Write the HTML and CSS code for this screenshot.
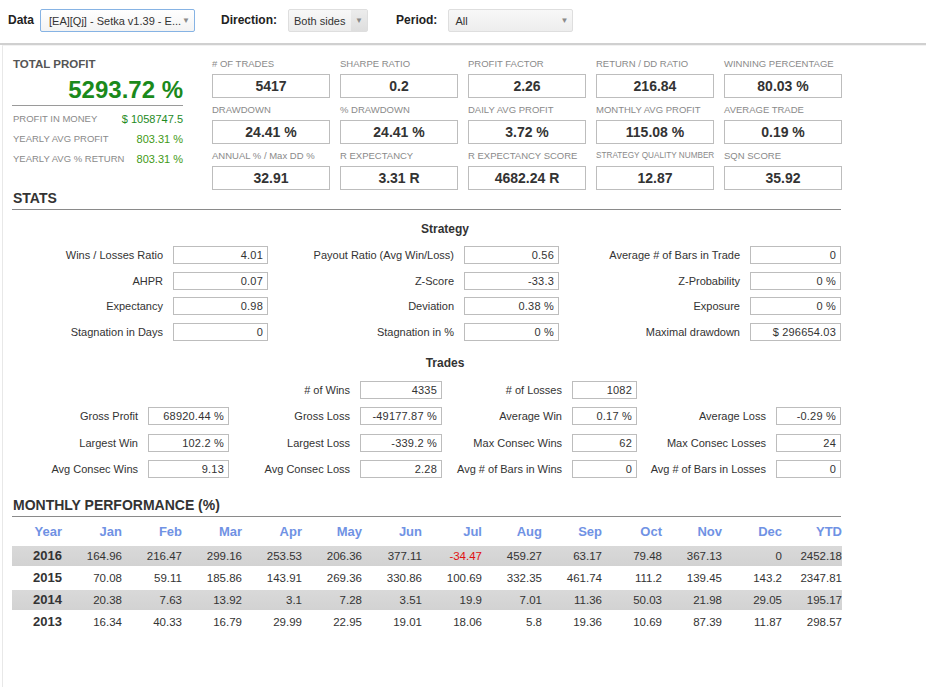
FILE: index.html
```html
<!DOCTYPE html>
<html lang="en">
  <head>
    <meta charset="utf-8" />
    <title>Strategy Report</title>
    <link rel="stylesheet" href="styles.css">
  </head>
  <body>
    <!-- Filters -->
    <div class="toolbar">
      <span class="toolbar-label">Data</span>
      <div class="select select-data">
        <span class="select-text">[EA][Qj] - Setka v1.39 - E...</span>
        <span class="select-arrow">&#9660;</span>
      </div>
      <span class="toolbar-label label-direction">Direction:</span>
      <div class="select select-direction">
        <span class="select-text">Both sides</span>
        <span class="select-arrow">&#9660;</span>
      </div>
      <span class="toolbar-label label-period">Period:</span>
      <div class="select select-period">
        <span class="select-text">All</span>
        <span class="select-arrow">&#9660;</span>
      </div>
    </div>

    <div class="panel">
      <!-- Summary -->
      <div class="summary">
        <div class="total">
          <div class="total-title">Total Profit</div>
          <div class="total-value">5293.72 %</div>
          <div class="total-row">
            <span class="total-label">Profit in money</span>
            <span class="total-num dark">$ 1058747.5</span>
          </div>
          <div class="total-row">
            <span class="total-label">Yearly avg profit</span>
            <span class="total-num">803.31 %</span>
          </div>
          <div class="total-row">
            <span class="total-label">Yearly avg % return</span>
            <span class="total-num">803.31 %</span>
          </div>
        </div>

        <div class="metrics">
          <div class="metric"><div class="metric-label"># of Trades</div><div class="metric-box">5417</div></div>
          <div class="metric"><div class="metric-label">Sharpe Ratio</div><div class="metric-box">0.2</div></div>
          <div class="metric"><div class="metric-label">Profit Factor</div><div class="metric-box">2.26</div></div>
          <div class="metric"><div class="metric-label">Return / DD Ratio</div><div class="metric-box">216.84</div></div>
          <div class="metric"><div class="metric-label">Winning Percentage</div><div class="metric-box">80.03 %</div></div>

          <div class="metric"><div class="metric-label">Drawdown</div><div class="metric-box">24.41 %</div></div>
          <div class="metric"><div class="metric-label">% Drawdown</div><div class="metric-box">24.41 %</div></div>
          <div class="metric"><div class="metric-label">Daily Avg Profit</div><div class="metric-box">3.72 %</div></div>
          <div class="metric"><div class="metric-label">Monthly Avg Profit</div><div class="metric-box">115.08 %</div></div>
          <div class="metric"><div class="metric-label">Average Trade</div><div class="metric-box">0.19 %</div></div>

          <div class="metric"><div class="metric-label no-caps">ANNUAL % / Max DD %</div><div class="metric-box">32.91</div></div>
          <div class="metric"><div class="metric-label">R Expectancy</div><div class="metric-box">3.31 R</div></div>
          <div class="metric"><div class="metric-label">R Expectancy Score</div><div class="metric-box">4682.24 R</div></div>
          <div class="metric"><div class="metric-label small">Strategy Quality Number</div><div class="metric-box">12.87</div></div>
          <div class="metric"><div class="metric-label">SQN Score</div><div class="metric-box">35.92</div></div>
        </div>
      </div>

      <!-- Stats -->
      <h2 class="section-title">STATS</h2>

      <h3 class="sub-title">Strategy</h3>
      <div class="kv-grid strategy">
        <span class="kv-label">Wins / Losses Ratio</span><div class="kv-box">4.01</div>
        <span class="kv-label">Payout Ratio (Avg Win/Loss)</span><div class="kv-box">0.56</div>
        <span class="kv-label">Average # of Bars in Trade</span><div class="kv-box">0</div>

        <span class="kv-label">AHPR</span><div class="kv-box">0.07</div>
        <span class="kv-label">Z-Score</span><div class="kv-box">-33.3</div>
        <span class="kv-label">Z-Probability</span><div class="kv-box">0 %</div>

        <span class="kv-label">Expectancy</span><div class="kv-box">0.98</div>
        <span class="kv-label">Deviation</span><div class="kv-box">0.38 %</div>
        <span class="kv-label">Exposure</span><div class="kv-box">0 %</div>

        <span class="kv-label">Stagnation in Days</span><div class="kv-box">0</div>
        <span class="kv-label">Stagnation in %</span><div class="kv-box">0 %</div>
        <span class="kv-label">Maximal drawdown</span><div class="kv-box">$ 296654.03</div>
      </div>

      <h3 class="sub-title trades-title">Trades</h3>
      <div class="kv-grid trades">
        <span></span><span></span>
        <span class="kv-label"># of Wins</span><div class="kv-box">4335</div>
        <span class="kv-label"># of Losses</span><div class="kv-box">1082</div>
        <span></span><span></span>

        <span class="kv-label">Gross Profit</span><div class="kv-box">68920.44 %</div>
        <span class="kv-label">Gross Loss</span><div class="kv-box">-49177.87 %</div>
        <span class="kv-label">Average Win</span><div class="kv-box">0.17 %</div>
        <span class="kv-label">Average Loss</span><div class="kv-box">-0.29 %</div>

        <span class="kv-label">Largest Win</span><div class="kv-box">102.2 %</div>
        <span class="kv-label">Largest Loss</span><div class="kv-box">-339.2 %</div>
        <span class="kv-label">Max Consec Wins</span><div class="kv-box">62</div>
        <span class="kv-label">Max Consec Losses</span><div class="kv-box">24</div>

        <span class="kv-label">Avg Consec Wins</span><div class="kv-box">9.13</div>
        <span class="kv-label">Avg Consec Loss</span><div class="kv-box">2.28</div>
        <span class="kv-label">Avg # of Bars in Wins</span><div class="kv-box">0</div>
        <span class="kv-label">Avg # of Bars in Losses</span><div class="kv-box">0</div>
      </div>

      <!-- Monthly performance -->
      <h2 class="section-title monthly-title">MONTHLY PERFORMANCE (%)</h2>
      <table class="monthly">
        <thead>
          <tr>
            <th class="col-year">Year</th>
            <th>Jan</th><th>Feb</th><th>Mar</th><th>Apr</th><th>May</th><th>Jun</th>
            <th>Jul</th><th>Aug</th><th>Sep</th><th>Oct</th><th>Nov</th><th>Dec</th><th>YTD</th>
          </tr>
        </thead>
        <tbody>
          <tr class="band">
            <td class="col-year">2016</td>
            <td>164.96</td><td>216.47</td><td>299.16</td><td>253.53</td><td>206.36</td><td>377.11</td>
            <td class="neg">-34.47</td><td>459.27</td><td>63.17</td><td>79.48</td><td>367.13</td><td>0</td><td>2452.18</td>
          </tr>
          <tr>
            <td class="col-year">2015</td>
            <td>70.08</td><td>59.11</td><td>185.86</td><td>143.91</td><td>269.36</td><td>330.86</td>
            <td>100.69</td><td>332.35</td><td>461.74</td><td>111.2</td><td>139.45</td><td>143.2</td><td>2347.81</td>
          </tr>
          <tr class="band">
            <td class="col-year">2014</td>
            <td>20.38</td><td>7.63</td><td>13.92</td><td>3.1</td><td>7.28</td><td>3.51</td>
            <td>19.9</td><td>7.01</td><td>11.36</td><td>50.03</td><td>21.98</td><td>29.05</td><td>195.17</td>
          </tr>
          <tr>
            <td class="col-year">2013</td>
            <td>16.34</td><td>40.33</td><td>16.79</td><td>29.99</td><td>22.95</td><td>19.01</td>
            <td>18.06</td><td>5.8</td><td>19.36</td><td>10.69</td><td>87.39</td><td>11.87</td><td>298.57</td>
          </tr>
        </tbody>
      </table>
    </div>
  </body>
</html>
```

FILE: styles.css
```css
* {
  margin: 0;
  padding: 0;
  box-sizing: border-box;
}

body {
  font-family: 'Liberation Sans', Arial, sans-serif;
  color: #333;
  background: #fff;
  width: 939px;
  overflow: hidden;
}

/* Filters toolbar */
.toolbar {
  display: flex;
  align-items: flex-start;
  width: 926px;
  height: 45px;
  padding: 9px 0 0 8px;
  border-bottom: 2px solid #d0d0d0;
}

.toolbar-label {
  font-size: 12px;
  font-weight: bold;
  line-height: 23px;
  color: #222;
}

.label-direction {
  margin-left: 26px;
}

.label-period {
  margin-left: 28px;
}

.select {
  position: relative;
  display: flex;
  align-items: center;
  height: 23px;
  font-size: 11px;
  color: #333;
  border: 1px solid #dedede;
  border-radius: 2px;
}

.select-text {
  white-space: nowrap;
}

.select-arrow {
  position: absolute;
  top: 0;
  right: 0;
  width: 16px;
  height: 21px;
  line-height: 21px;
  text-align: center;
  font-size: 8px;
  color: #8a8a8a;
}

.select-data {
  width: 155px;
  margin-left: 6px;
  padding-left: 8px;
  border-color: #86b3e4;
  background: linear-gradient(#ffffff, #f3f3f3);
}

.select-direction {
  width: 80px;
  margin-left: 11px;
  padding-left: 5px;
  background: linear-gradient(#f8f8f8, #ececec);
}

.select-direction .select-arrow {
  background: linear-gradient(#ececec, #dedede);
}

.select-period {
  width: 125px;
  margin-left: 11px;
  padding-left: 6px;
  background: linear-gradient(#f8f8f8, #ededed);
}

/* Main panel */
.panel {
  width: 924px;
  min-height: 642px;
  margin-left: 2px;
  padding: 11px 0 0 9px;
  border-left: 1px solid #e8e8e8;
  border-top: 1px solid #f2f2f2;
}

.summary {
  display: flex;
}

.total {
  width: 171px;
  margin-right: 29px;
}

.total-title {
  font-size: 11.5px;
  font-weight: bold;
  line-height: 14px;
  color: #555;
  text-transform: uppercase;
  padding-left: 1px;
}

.total-value {
  margin-top: 5px;
  padding-bottom: 1px;
  font-size: 24px;
  font-weight: bold;
  line-height: 28px;
  text-align: right;
  color: #1b8a1b;
  border-bottom: 1px solid #9a9a9a;
}

.total-row {
  display: flex;
  justify-content: space-between;
  line-height: 20px;
  padding-left: 1px;
}

.total-value + .total-row {
  margin-top: 3px;
}

.total-label {
  font-size: 9.5px;
  color: #8a8a8a;
  text-transform: uppercase;
}

.total-num {
  font-size: 11px;
  color: #3f9a16;
}

.total-num.dark {
  color: #1e8a1e;
}

.metrics {
  display: grid;
  grid-template-columns: repeat(5, 118px);
  column-gap: 10px;
  row-gap: 5px;
}

.metric-label {
  font-size: 9.5px;
  line-height: 14px;
  color: #8a8a8a;
  text-transform: uppercase;
  white-space: nowrap;
}

.metric-label.no-caps {
  text-transform: none;
}

.metric-label.small {
  font-size: 8.2px;
}

.metric-box {
  height: 24px;
  margin-top: 3px;
  border: 1px solid #bdbdbd;
  font-size: 14px;
  font-weight: bold;
  line-height: 22px;
  text-align: center;
  color: #333;
}

/* Section headings */
.section-title {
  width: 829px;
  padding-bottom: 3px;
  padding-left: 1px;
  font-size: 14px;
  font-weight: bold;
  line-height: 16px;
  color: #333;
  border-bottom: 1px solid #8a8a8a;
}

.sub-title {
  width: 829px;
  margin: 11px 0 9px;
  padding-left: 37px;
  font-size: 12px;
  font-weight: bold;
  line-height: 16px;
  text-align: center;
  color: #333;
}

.trades-title {
  margin: 14px 0 10px;
}

/* Key / value grids */
.kv-grid {
  display: grid;
  width: 829px;
  grid-auto-rows: 18px;
  align-items: center;
}

.strategy {
  grid-template-columns: 161px 95px 196px 95px 191px 91px;
  row-gap: 7.7px;
}

.trades {
  grid-template-columns: 136px 81px 131px 82px 130px 65px 139px 65px;
  row-gap: 8.3px;
}

.kv-label {
  padding-right: 10px;
  font-size: 11px;
  text-align: right;
  white-space: nowrap;
  color: #333;
}

.kv-box {
  height: 18px;
  padding-right: 4px;
  border: 1px solid #bdbdbd;
  font-size: 11px;
  line-height: 16px;
  text-align: right;
  color: #333;
  letter-spacing: 0.2px;
}

/* Monthly table */
.monthly-title {
  margin-top: 19px;
}

.monthly {
  width: 830px;
  border-collapse: separate;
  border-spacing: 0 2.4px;
  table-layout: fixed;
}

.monthly th,
.monthly td {
  width: 60px;
  text-align: right;
  white-space: nowrap;
}

.monthly .col-year {
  width: 50px;
}

.monthly th {
  height: 25px;
  font-size: 13px;
  font-weight: bold;
  color: #7092e4;
}

.monthly td {
  height: 20px;
  font-size: 11.5px;
  color: #333;
}

.monthly td.col-year {
  font-size: 13px;
  font-weight: bold;
}

.monthly tr.band td {
  background: linear-gradient(#d9d9d9, #d2d2d2);
}

.monthly td.neg {
  color: #e01010;
}
```
